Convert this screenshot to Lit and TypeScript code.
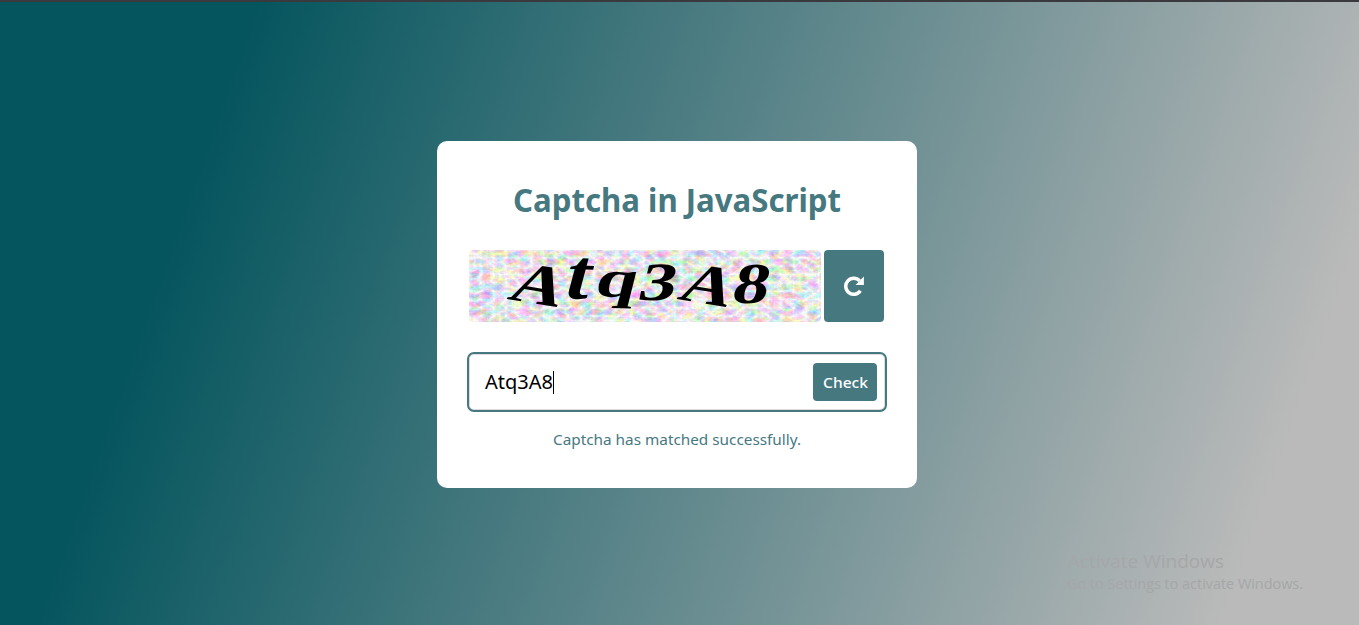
import { LitElement, html, css, svg } from "lit";
import { customElement } from "lit/decorators.js";

const GLYPHS = [
  { c: "A", x: 37, y: 49, r: 9, k: -14, sx: 1.24, s: 58 },
  { c: "t", x: 92, y: 48, r: 2, k: -13, sx: 1.08, s: 72 },
  { c: "q", x: 124, y: 46, r: 2, k: -12, sx: 1.4, s: 53 },
  { c: "3", x: 167, y: 50, r: 0, k: -14, sx: 1.38, s: 54 },
  { c: "A", x: 207, y: 49, r: 9, k: -14, sx: 1.24, s: 57 },
  { c: "8", x: 261, y: 53, r: 0, k: -12, sx: 1.25, s: 58 },
];

@customElement("app-root")
export class AppRoot extends LitElement {
  static styles = css`
    :host { display: block; }
    * { box-sizing: border-box; }
    .page {
      width: 100%; height: 625px; padding-top: 139px; border-top: 2px solid #3a393d;
      background: linear-gradient(109.6deg, #05555e 16.2%, #bababa 91.4%) border-box;
      font-family: "Noto Sans", sans-serif; position: relative; overflow: hidden;
    }
    .card {
      width: 480px; height: 347px; margin-left: 437px; padding: 30px;
      background: #fff; border-radius: 10px; color: #46787f;
      display: flex; flex-direction: column;
    }
    .card > * { flex-shrink: 0; }
    .line { display: block; overflow: visible; }
    .title { font-weight: 700; font-size: 31.5px; fill: #46787f; }
    .row { display: flex; gap: 3px; margin: 19px 0 30px 2px; }
    .captcha { width: 352px; height: 72px; border-radius: 5px; display: block; overflow: visible; }
    .glyph { font-family: "Liberation Serif", serif; font-weight: 700; fill: #000; }
    .btn { border: 0; padding: 0; background: #46787f; color: #fff; border-radius: 4px; display: flex; align-items: center; justify-content: center; font-family: "Noto Sans", sans-serif; }
    .reload { width: 60px; height: 72px; }
    .field {
      width: 420px; height: 60px; border: 2px solid #46787f; border-radius: 7px; padding: 0 8px 0 16px;
      display: flex; align-items: center; box-shadow: inset 0 0 0 1px #dcdce0;
    }
    .caret { width: 1px; height: 23px; background: #000; }
    .value { font-size: 20px; fill: #000; }
    .check { width: 64px; height: 38px; margin-left: auto; }
    .label { font-size: 15px; font-weight: 500; fill: #fff; }
    .status { font-size: 15px; fill: #46787f; }
    .notice { position: absolute; left: 1067px; top: 545px; overflow: visible; font-family: "Open Sans", sans-serif; }
    .n1 { font-size: 19px; fill: #a5a7a8; }
    .n2 { font-size: 15px; fill: #a5a7a8; }
  `;

  render() {
    return html`<div class="page">
      <div class="card">
        <svg class="line" width="420" height="60"><text class="title" x="46" y="40.5" textLength="328" lengthAdjust="spacingAndGlyphs">Captcha in JavaScript</text></svg>
        <div class="row">
          <svg class="captcha" viewBox="0 0 352 72">
            <defs>
              <filter id="grain" x="0" y="0" width="100%" height="100%" color-interpolation-filters="sRGB">
                <feTurbulence type="turbulence" baseFrequency="0.08 0.12" numOctaves="5" seed="14"></feTurbulence>
                <feColorMatrix values="-.6 .06 0 0 1.07  0 -.54 .04 0 1.05  .06 0 -.58 0 1.07  0 0 0 0 1"></feColorMatrix>
              </filter>
              <clipPath id="panel"><rect width="352" height="72" rx="5"></rect></clipPath>
            </defs>
            <g clip-path="url(#panel)"><rect width="352" height="72" filter="url(#grain)"></rect></g>
            ${GLYPHS.map((g) => svg`<text class="glyph" font-size=${g.s} transform="translate(${g.x} ${g.y}) rotate(${g.r}) skewX(${g.k}) scale(${g.sx} 1)">${g.c}</text>`)}
          </svg>
          <button class="btn reload" aria-label="Reload">
            <svg width="20" height="20" viewBox="0 0 20 20">
              <path d="M16.4 14.7A8 8 0 1 1 15.6 4.8" fill="none" stroke="#fff" stroke-width="3.5"></path>
              <path d="M19.9 .6v8.4H11.5z" fill="#fff"></path>
            </svg>
          </button>
        </div>
        <div class="field">
          <svg class="line" width="68" height="30"><text class="value" x="0" y="22" textLength="68" lengthAdjust="spacingAndGlyphs">Atq3A8</text></svg>
          <span class="caret"></span>
          <button class="btn check"><svg width="64" height="38"><text class="label" x="10" y="25" textLength="45" lengthAdjust="spacingAndGlyphs">Check</text></svg></button>
        </div>
        <svg class="line" width="420" height="50"><text class="status" x="86" y="33" textLength="248" lengthAdjust="spacingAndGlyphs">Captcha has matched successfully.</text></svg>
      </div>
      <svg class="notice" width="250" height="50">
        <text class="n1" x="1" y="21" textLength="156" lengthAdjust="spacingAndGlyphs">Activate Windows</text>
        <text class="n2" x="0" y="42" textLength="236" lengthAdjust="spacingAndGlyphs">Go to Settings to activate Windows.</text>
      </svg>
    </div>`;
  }
}
